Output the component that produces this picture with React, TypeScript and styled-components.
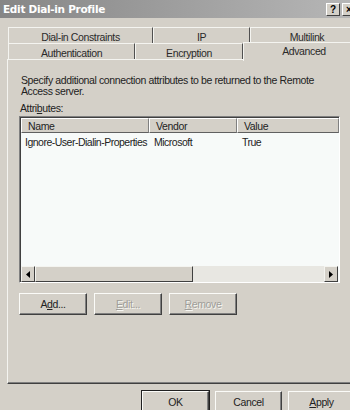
import styled, { createGlobalStyle } from 'styled-components'

const GlobalStyle = createGlobalStyle`
  html, body {
    margin: 0;
    padding: 0;
    background: #d4d0c8;
    overflow: hidden;
  }
  body {
    font-family: 'Liberation Sans', Arial, sans-serif;
    font-size: 10.5px;
    letter-spacing: -0.38px;
    color: #111;
  }
`

const Screen = styled.div`
  width: 350px;
  height: 410px;
  overflow: hidden;
`

const Window = styled.div`
  width: 364px;
  height: 410px;
  display: flex;
  flex-direction: column;
  background: #d4d0c8;
`

const TitleBar = styled.div`
  height: 18px;
  flex: none;
  display: flex;
  align-items: center;
  padding: 0 8px 0 3px;
  background: linear-gradient(to right, #868686, #b8b8b8);
`

const TitleText = styled.span`
  flex: 1;
  font-family: 'DejaVu Sans', Verdana, sans-serif;
  font-weight: bold;
  font-size: 10.5px;
  letter-spacing: -0.3px;
  color: #fff;
`

const CaptionButton = styled.div`
  width: 12px;
  height: 11px;
  margin-left: 2px;
  display: flex;
  align-items: center;
  justify-content: center;
  background: #d4d0c8;
  border-top: 1px solid #fff;
  border-left: 1px solid #fff;
  border-right: 1px solid #404040;
  border-bottom: 1px solid #404040;
  font-weight: bold;
  font-size: 10px;
  letter-spacing: 0;
  color: #000;
`

const Body = styled.div`
  flex: 1;
  display: flex;
  flex-direction: column;
  padding: 9px 0 0 7px;
`

const TabRow = styled.div<{ $front?: boolean }>`
  display: flex;
  height: 16px;
  margin-left: 1px;
  position: relative;
  z-index: ${(p) => (p.$front ? 2 : 1)};
`

const Tab = styled.div<{ $w?: number; $active?: boolean }>`
  ${(p) => (p.$w ? `width: ${p.$w}px; flex: none;` : 'flex: 1;')}
  box-sizing: border-box;
  display: flex;
  align-items: center;
  justify-content: center;
  background: #d4d0c8;
  border-top: 1px solid #f4f4f0;
  border-left: 1px solid #f4f4f0;
  border-right: 1px solid #505050;
  color: #2a2a2a;
  ${(p) =>
    p.$active
      ? `height: 19px; margin-top: -1px; padding-bottom: 2px; border-right: none;`
      : `height: 16px; padding-top: 2px;`}
`

const Panel = styled.div`
  flex: none;
  height: 325px;
  box-sizing: border-box;
  border-top: 1px solid #f4f4f0;
  border-left: 1px solid #f4f4f0;
  border-bottom: 1px solid #404040;
  box-shadow: inset 0 -1px 0 #808080;
  padding: 15px 0 0 11px;
  display: flex;
  flex-direction: column;
`

const Description = styled.p`
  margin: 0 0 0 2px;
  width: 310px;
  line-height: 11px;
  color: #222;
`

const Label = styled.div`
  margin: 5px 0 2px 1px;
  color: #222;
`

const ListBox = styled.div`
  width: 321px;
  height: 167px;
  box-sizing: border-box;
  border-top: 1px solid #808080;
  border-left: 1px solid #808080;
  border-right: 1px solid #fff;
  border-bottom: 1px solid #fff;
  box-shadow: inset 1px 1px 0 #404040;
  background: #f7faf9;
  display: flex;
  flex-direction: column;
  padding: 1px 0 0 1px;
`

const HeaderRow = styled.div`
  display: flex;
  height: 15px;
  flex: none;
`

const HeaderCell = styled.div<{ $w?: number }>`
  ${(p) => (p.$w ? `width: ${p.$w}px; flex: none;` : 'flex: 1;')}
  box-sizing: border-box;
  background: #d4d0c8;
  border-top: 1px solid #fff;
  border-left: 1px solid #fff;
  border-right: 1px solid #808080;
  border-bottom: 1px solid #606060;
  padding: 1px 0 0 6px;
  line-height: 12px;
  color: #222;
`

const Rows = styled.div`
  flex: 1;
`

const Row = styled.div`
  display: flex;
  height: 14px;
  align-items: center;
  margin-top: 2px;
  letter-spacing: -0.5px;
`

const Cell = styled.div<{ $w?: number; $pad?: number }>`
  ${(p) => (p.$w ? `width: ${p.$w}px; flex: none;` : 'flex: 1;')}
  box-sizing: border-box;
  padding-left: ${(p) => p.$pad ?? 5}px;
  white-space: nowrap;
  color: #222;
`

const ScrollBar = styled.div`
  height: 16px;
  flex: none;
  display: flex;
  margin-right: 1px;
`

const ScrollArrow = styled.div`
  width: 14px;
  height: 16px;
  box-sizing: border-box;
  background: #d4d0c8;
  border-top: 1px solid #f4f4f0;
  border-left: 1px solid #f4f4f0;
  border-right: 1px solid #404040;
  border-bottom: 1px solid #404040;
  display: flex;
  align-items: center;
  justify-content: center;
`

const Thumb = styled.div`
  width: 158px;
  height: 16px;
  box-sizing: border-box;
  background: #d4d0c8;
  border-top: 1px solid #f4f4f0;
  border-left: 1px solid #f4f4f0;
  border-right: 1px solid #404040;
  border-bottom: 1px solid #404040;
`

const Track = styled.div`
  flex: 1;
  background: #e8e7e2;
`

const ButtonRow = styled.div`
  display: flex;
  gap: 7px;
  margin-top: 10px;
`

const Button = styled.div<{ $w: number; $disabled?: boolean; $default?: boolean }>`
  width: ${(p) => p.$w}px;
  height: 22px;
  box-sizing: border-box;
  display: flex;
  align-items: center;
  justify-content: center;
  background: #d4d0c8;
  border-top: 1px solid #fbfbf8;
  border-left: 1px solid #fbfbf8;
  border-right: 1px solid #404040;
  border-bottom: 1px solid #404040;
  box-shadow: inset -1px -1px 0 #808080;
  color: ${(p) => (p.$disabled ? '#a09e99' : '#222')};
  ${(p) => (p.$disabled ? 'text-shadow: 1px 1px 0 #f6f6f2;' : '')}
  ${(p) => (p.$default ? 'outline: 1px solid #202020;' : '')}
`

const Footer = styled.div`
  display: flex;
  padding: 7px 0 0 135px;
  gap: 6px;
`

const Tri = ({ dir }: { dir: 'l' | 'r' }) => (
  <svg width="4" height="7" viewBox="0 0 4 7">
    <path d={dir === 'l' ? 'M4 0 L0 3.5 L4 7 Z' : 'M0 0 L4 3.5 L0 7 Z'} fill="#000" />
  </svg>
)

const App = () => {
  return (
    <Screen>
      <GlobalStyle />
      <Window>
        <TitleBar>
          <TitleText>Edit Dial-in Profile</TitleText>
          <CaptionButton>?</CaptionButton>
          <CaptionButton>×</CaptionButton>
        </TitleBar>
        <Body>
          <TabRow>
            <Tab $w={145}>Dial-in Constraints</Tab>
            <Tab $w={97}>IP</Tab>
            <Tab>Multilink</Tab>
          </TabRow>
          <TabRow $front>
            <Tab $w={127}>Authentication</Tab>
            <Tab $w={108}>Encryption</Tab>
            <Tab $active>Advanced</Tab>
          </TabRow>
          <Panel>
            <Description>
              Specify additional connection attributes to be returned to the Remote Access server.
            </Description>
            <Label>
              Attri<u>b</u>utes:
            </Label>
            <ListBox>
              <HeaderRow>
                <HeaderCell $w={128}>Name</HeaderCell>
                <HeaderCell $w={88}>Vendor</HeaderCell>
                <HeaderCell>Value</HeaderCell>
              </HeaderRow>
              <Rows>
                <Row>
                  <Cell $w={128} $pad={4}>Ignore-User-Dialin-Properties</Cell>
                  <Cell $w={88}>Microsoft</Cell>
                  <Cell>True</Cell>
                </Row>
              </Rows>
              <ScrollBar>
                <ScrollArrow>
                  <Tri dir="l" />
                </ScrollArrow>
                <Thumb />
                <Track />
                <ScrollArrow>
                  <Tri dir="r" />
                </ScrollArrow>
              </ScrollBar>
            </ListBox>
            <ButtonRow>
              <Button $w={68}>
                A<u>d</u>d...
              </Button>
              <Button $w={68} $disabled>
                <u>E</u>dit...
              </Button>
              <Button $w={68} $disabled>
                <u>R</u>emove
              </Button>
            </ButtonRow>
          </Panel>
          <Footer>
            <Button $w={67} $default>OK</Button>
            <Button $w={67}>Cancel</Button>
            <Button $w={67}>
              <u>A</u>pply
            </Button>
          </Footer>
        </Body>
      </Window>
    </Screen>
  )
}

export default App
